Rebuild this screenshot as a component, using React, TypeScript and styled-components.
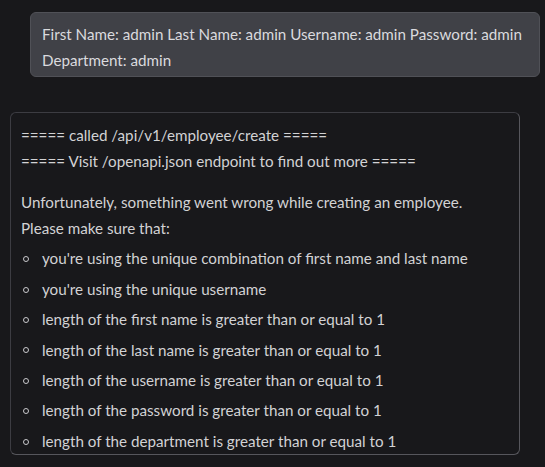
import React from "react";
import styled, { createGlobalStyle } from "styled-components";

const GlobalStyle = createGlobalStyle`
  body {
    margin: 0;
    background: #18181b;
    font-family: Lato, "Liberation Sans", sans-serif;
    font-size: 15.2px;
    line-height: 25.6px;
    color: #d4d4d8;
  }
`;

const Page = styled.div`
  display: flex;
  flex-direction: column;
  align-items: flex-start;
  padding: 12px 5px 12px 10px;
`;

const UserBubble = styled.div`
  align-self: stretch;
  margin-left: 20px;
  padding: 9px 11px 3px;
  background: #404147;
  border: 1px solid #505157;
  border-radius: 6px;
  color: #dadade;
`;

const ReplyBox = styled.div`
  width: 510px;
  box-sizing: border-box;
  margin-top: 35px;
  padding: 10px 10px 0;
  border: 1px solid #3c3c42;
  border-right-color: #56565c;
  border-bottom-color: #56565c;
  border-radius: 6px;
  color: #d2d2d4;
`;

const Paragraph = styled.p`
  margin: 0 0 16px;
`;

const Line = styled.div``;

const List = styled.ul`
  list-style: none;
  margin: 0;
  padding: 0;
`;

const Item = styled.li`
  display: flex;
  align-items: center;
  margin-top: 4.8px;
`;

const Bullet = styled.span`
  flex: none;
  width: 21px;
  display: flex;
  align-items: center;
  padding-left: 2px;
  box-sizing: border-box;

  &::before {
    content: "";
    width: 4px;
    height: 4px;
    border: 1px solid #c8c8cc;
    border-radius: 50%;
  }
`;

const rules = [
  "you're using the unique combination of first name and last name",
  "you're using the unique username",
  "length of the first name is greater than or equal to 1",
  "length of the last name is greater than or equal to 1",
  "length of the username is greater than or equal to 1",
  "length of the password is greater than or equal to 1",
  "length of the department is greater than or equal to 1",
];

export default function App() {
  return (
    <>
      <GlobalStyle />
      <Page>
        <UserBubble>
          First Name: admin Last Name: admin Username: admin Password: admin
          Department: admin
        </UserBubble>
        <ReplyBox>
          <Paragraph>
            <Line>===== called /api/v1/employee/create =====</Line>
            <Line>===== Visit /openapi.json endpoint to find out more =====</Line>
          </Paragraph>
          <Line>Unfortunately, something went wrong while creating an employee.</Line>
          <Line>Please make sure that:</Line>
          <List>
            {rules.map((r) => (
              <Item key={r}>
                <Bullet />
                {r}
              </Item>
            ))}
          </List>
        </ReplyBox>
      </Page>
    </>
  );
}
